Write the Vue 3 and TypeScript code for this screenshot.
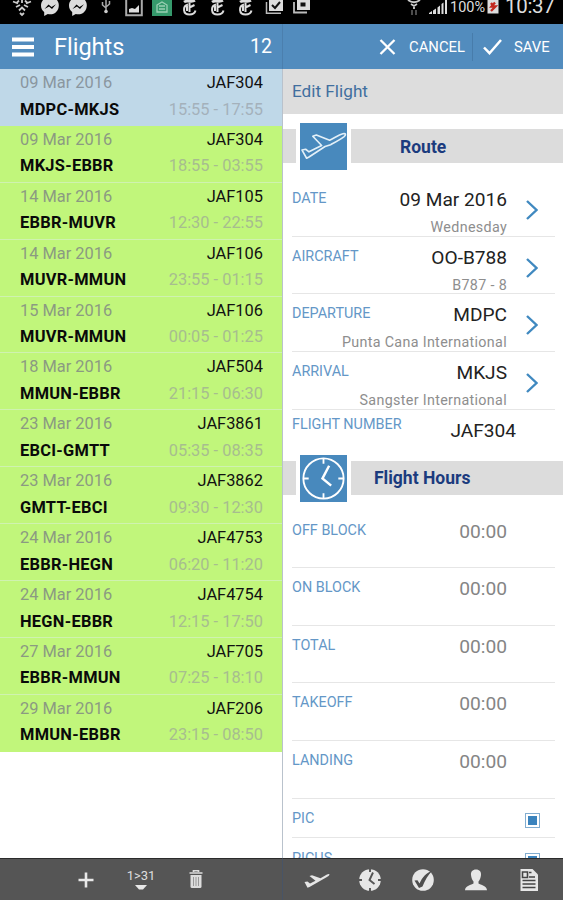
<script setup lang="ts">
interface Flight {
  date: string
  code: string
  route: string
  hours: string
}

interface RouteField {
  label: string
  value: string
  detail: string
}

const flights: Flight[] = [
  { date: '09 Mar 2016', code: 'JAF304', route: 'MDPC-MKJS', hours: '15:55 - 17:55' },
  { date: '09 Mar 2016', code: 'JAF304', route: 'MKJS-EBBR', hours: '18:55 - 03:55' },
  { date: '14 Mar 2016', code: 'JAF105', route: 'EBBR-MUVR', hours: '12:30 - 22:55' },
  { date: '14 Mar 2016', code: 'JAF106', route: 'MUVR-MMUN', hours: '23:55 - 01:15' },
  { date: '15 Mar 2016', code: 'JAF106', route: 'MUVR-MMUN', hours: '00:05 - 01:25' },
  { date: '18 Mar 2016', code: 'JAF504', route: 'MMUN-EBBR', hours: '21:15 - 06:30' },
  { date: '23 Mar 2016', code: 'JAF3861', route: 'EBCI-GMTT', hours: '05:35 - 08:35' },
  { date: '23 Mar 2016', code: 'JAF3862', route: 'GMTT-EBCI', hours: '09:30 - 12:30' },
  { date: '24 Mar 2016', code: 'JAF4753', route: 'EBBR-HEGN', hours: '06:20 - 11:20' },
  { date: '24 Mar 2016', code: 'JAF4754', route: 'HEGN-EBBR', hours: '12:15 - 17:50' },
  { date: '27 Mar 2016', code: 'JAF705', route: 'EBBR-MMUN', hours: '07:25 - 18:10' },
  { date: '29 Mar 2016', code: 'JAF206', route: 'MMUN-EBBR', hours: '23:15 - 08:50' },
]

const routeFields: RouteField[] = [
  { label: 'DATE', value: '09 Mar 2016', detail: 'Wednesday' },
  { label: 'AIRCRAFT', value: 'OO-B788', detail: 'B787 - 8' },
  { label: 'DEPARTURE', value: 'MDPC', detail: 'Punta Cana International' },
  { label: 'ARRIVAL', value: 'MKJS', detail: 'Sangster International' },
]

const hourFields: string[] = ['OFF BLOCK', 'ON BLOCK', 'TOTAL', 'TAKEOFF', 'LANDING']
const roleFields: string[] = ['PIC', 'PICUS']
</script>

<template>
  <div class="screen">
    <header class="status">
      <div class="tray">
        <svg class="glyph" viewBox="0 0 20 18"><path d="M1 1.500l5 2M19 1.500l-5 2M4 7l4-2M16 7l-4-2M7 10.500l3-3 3 3M10 0v3M8 13l2 2 2-2M4 3.500l3-3M16 3.500l-3-3" stroke="#ccc" stroke-width="1.800" fill="none" /></svg>
        <svg v-for="n in 2" :key="'m' + n" class="glyph" viewBox="0 0 20 18"><path d="M10-3C4.500-3 1 1 1 5.500c0 3 1.200 5 3.200 6.500v4l3.600-2c6 1.500 11-2.500 11-8.500C19 1 15.500-3 10-3z" fill="#ddd" /><path d="M4.500 9l4-4.500 3 2.500 4.500-2.800-4 4.800-3-2.500z" fill="#000" /></svg>
        <svg class="glyph" viewBox="0 0 20 18"><path d="M10 0v13M6.500 2v3l3.500 3M13.500 1v3L10 7" stroke="#aaa" stroke-width="1.500" fill="none" /><circle cx="10" cy="11.500" r="1.800" fill="#ccc" /></svg>
        <svg class="glyph" viewBox="0 0 20 18"><path d="M2.200-2h15.600v17.200H2.200z" stroke="#aaa" stroke-width="2" fill="none" /><path d="M5 12.500V9l3-1 3 1 4-4v7.500z" fill="#ddd" /></svg>
        <svg class="glyph" viewBox="0 0 20 18"><path d="M0 0h20v16H0z" fill="#35996b" /><path d="M5 5l5-3 5 3v7H5zM7 6h6M7 9h6" stroke="#9bd0b4" stroke-width="1.300" fill="none" /></svg>
        <svg v-for="n in 3" :key="'t' + n" class="glyph" viewBox="0 0 20 18"><path d="M4 2c3-2.500 7 1 11-1.500" stroke="#ddd" stroke-width="2.600" fill="none" /><path d="M8 4.500C2.500 6 2.500 14.500 9.500 14.500c3.500 0 5.500-2 6-4M9.500 2.500V12M9.500 7.500L14.500 5M7 6v5" stroke="#ddd" stroke-width="2" fill="none" /></svg>
        <svg class="glyph" viewBox="0 0 20 18"><path d="M5 0h14v11H5z" fill="#ddd" /><path d="M8 5l3 3 5-6" stroke="#111" stroke-width="2" fill="none" /><path d="M2.500 2v11.200H17" stroke="#bbb" stroke-width="1.500" fill="none" /></svg>
        <svg class="glyph" viewBox="0 0 20 18"><path d="M5 0h13v10H5z" fill="#ddd" /><path d="M8.500 2.500h5v4h-5z" fill="#111" /><path d="M2 2v10.500h13" stroke="#bbb" stroke-width="1.800" fill="none" /></svg>
      </div>
      <div class="system">
        <svg class="wifi" viewBox="0 0 16 18"><path d="M2 0c4 3 8 3 12 0M5 4l3 2 3-2M8 5v4" stroke="#ccc" stroke-width="1.800" fill="none" /><path d="M6 10v5M10 10v5" stroke="#666" stroke-width="1.500" /></svg>
        <svg class="bars" viewBox="0 0 20 18"><path d="M1 14h3v-3l-3 2zM5 14h3V8.500L5 10.500zM9.500 14h2.500V5.500l-2.500 2zM13.500 14h2V2.500l-2 1.500zM17 14h2V0h-2z" fill="#ddd" /></svg>
        <span class="percent">100%</span>
        <svg class="battery" viewBox="0 0 12 18"><path d="M.5 0h11v13.500H.5z" fill="#ddd" /><path d="M8 2.500L4.500 6.500h4L4 11M4 3l1.500 2" stroke="#c3281e" stroke-width="2.300" fill="none" /></svg>
        <span class="time">10:37</span>
      </div>
    </header>

    <div class="panes">
      <section class="list-pane">
        <div class="bar list-bar">
          <svg class="menu" viewBox="0 0 22 20"><path d="M0 2.500h22M0 10h22M0 17.500h22" stroke="#fff" stroke-width="4" /></svg>
          <h1>Flights</h1>
          <span class="count">12</span>
        </div>
        <ul class="flights">
          <li v-for="(flight, i) in flights" :key="i" :class="{ selected: i === 0 }">
            <div class="line">
              <span class="date">{{ flight.date }}</span>
              <span class="code">{{ flight.code }}</span>
            </div>
            <div class="line">
              <span class="route">{{ flight.route }}</span>
              <span class="hours">{{ flight.hours }}</span>
            </div>
          </li>
        </ul>
        <footer class="toolbar list-tools">
          <svg class="add" viewBox="0 0 16 16"><path d="M8 .5v15M.5 8h15" stroke="#e8e8e8" stroke-width="2.600" /></svg>
          <div class="range">
            <span>1&gt;31</span>
            <svg viewBox="0 0 12 6"><path d="M0 0h12L8 4.500H4z" fill="#e8e8e8" /></svg>
          </div>
          <svg class="trash" viewBox="0 0 14 19"><path d="M4.500 2V.7h5V2M.5 3h13" stroke="#ddd" stroke-width="1.700" fill="none" /><path d="M1.500 5h11v11.500q0 1.500-1.500 1.500H3q-1.500 0-1.500-1.500z" fill="#ddd" /><path d="M4.500 7v9M7 7v9M9.500 7v9" stroke="#999" stroke-width="1" /></svg>
        </footer>
      </section>

      <section class="edit-pane">
        <div class="bar edit-bar">
          <button class="action cancel">
            <svg viewBox="0 0 16 16"><path d="M1 1l14 14M15 1L1 15" stroke="#fff" stroke-width="2.300" /></svg>
            <span>CANCEL</span>
          </button>
          <i class="split"></i>
          <button class="action save">
            <svg viewBox="0 0 19 16"><path d="M1 8.500l5.500 5.700L18 1" stroke="#fff" stroke-width="2.500" fill="none" /></svg>
            <span>SAVE</span>
          </button>
        </div>
        <h2>Edit Flight</h2>
        <div class="form">
          <div class="section">
            <div class="tile">
              <svg viewBox="0 0 46 46"><path d="M2 26.500l3.500-.8 3.300 2.500 12.400-6.200L12.500 13l3.500-1.300L29 16.800c5-2.500 9.500-5.400 13-6.300 3-.5 3.300 1 1.200 2.800-3.500 2.700-8.200 5.200-13.200 7.900L24.500 23 8.800 33.300 6.500 34.500z" stroke="#e3f0f8" stroke-width="1.600" stroke-linejoin="round" fill="none" /></svg>
            </div>
            <h3 class="route-title">Route</h3>
          </div>
          <div v-for="field in routeFields" :key="field.label" class="row route-row">
            <label>{{ field.label }}</label>
            <div class="values">
              <strong>{{ field.value }}</strong>
              <small>{{ field.detail }}</small>
            </div>
            <svg class="chevron" viewBox="0 0 12 20"><path d="M1 1l9.500 9L1 19" stroke="#4089c0" stroke-width="2.400" fill="none" /></svg>
          </div>
          <div class="row number-row">
            <label>FLIGHT NUMBER</label>
            <strong>JAF304</strong>
          </div>
          <div class="section">
            <div class="tile">
              <svg viewBox="0 0 46 46"><circle cx="23" cy="23" r="19.700" stroke="#fff" stroke-width="1.800" fill="none" /><path d="M23 3v5.500M23 37.500V43M3 23h5.500M37.500 23H43" stroke="#fff" stroke-width="1.800" /><path d="M28.500 10.500L22 23l8.500 7" stroke="#fff" stroke-width="2.400" fill="none" /></svg>
            </div>
            <h3 class="hours-title">Flight Hours</h3>
          </div>
          <div v-for="label in hourFields" :key="label" class="row hour-row">
            <label>{{ label }}</label>
            <span class="clock">00:00</span>
          </div>
          <div v-for="label in roleFields" :key="label" class="row role-row">
            <label>{{ label }}</label>
            <i class="check"></i>
          </div>
        </div>
        <footer class="toolbar edit-tools">
          <svg viewBox="0 0 26 24"><path d="M.5 14l3-.5 2.500 2 5.500-2.800L5.500 8l2.500-.8 8.500 3 6-3.500q3-1.300 3 0-.5 1-3 2.500L5.500 19l-2 .8z" fill="#e6e6e6" /></svg>
          <svg viewBox="0 0 26 24"><circle cx="13" cy="12" r="10.800" fill="#e6e6e6" /><path d="M13 0v4M13 20v4M1 12h4M21 12h4M16 4.500L12.500 12l5 4" stroke="#555" stroke-width="1.900" fill="none" /></svg>
          <svg viewBox="0 0 26 24"><circle cx="13" cy="12" r="10.800" fill="#e6e6e6" /><path d="M4.500 12.500l3-.3 2 3.300C12.500 9 16 5 22.500 2.500 18 7 15 12 12.500 18.500L9 20z" fill="#4d4d4d" /></svg>
          <svg viewBox="0 0 26 24"><path d="M13 1.500c3.500 0 5.300 2.300 5 5.500-.3 3-1.200 5-2.500 6.500v2c2 1.500 8.500 2 8.500 6.800H2c0-4.800 6.500-5.300 8.500-6.800v-2C9.200 12 8.300 10 8 7c-.3-3.200 1.500-5.500 5-5.500z" fill="#e6e6e6" /></svg>
          <svg viewBox="0 0 26 24"><path d="M4.500 1h12l5.500 5.500V23h-17.500z" fill="#e6e6e6" /><path d="M6.500 4h5v5.500h-5zM13 4.500h2.500M13 9h6M6.500 12.500h13M6.500 16h13M6.500 19.500h13" stroke="#444" stroke-width="1.600" fill="none" /></svg>
        </footer>
      </section>
    </div>
  </div>
</template>

<style>
body {
  margin: 0;
}
</style>

<style scoped>
* {
  box-sizing: border-box;
}

.screen {
  display: flex;
  flex-direction: column;
  width: 563px;
  height: 900px;
  overflow: hidden;
  background: #fff;
  color: #111;
  font-family: Roboto, "Liberation Sans", sans-serif;
}

svg {
  display: block;
  flex: none;
}

h1,
h2,
h3,
ul {
  margin: 0;
  padding: 0;
}

.status {
  display: flex;
  flex: none;
  justify-content: space-between;
  height: 24px;
  padding: 0 8px 0 12px;
  background: #000;
  color: #ddd;
}

.tray {
  display: flex;
  gap: 8px;
}

.glyph {
  width: 20px;
  height: 18px;
}

.system {
  display: flex;
}

.wifi {
  width: 16px;
  height: 18px;
  margin-right: 6px;
}

.bars {
  width: 20px;
  height: 18px;
  margin-right: 2px;
}

.percent {
  width: 37px;
  font-size: 14.5px;
  line-height: 15px;
}

.battery {
  width: 12px;
  height: 18px;
  margin-right: 6px;
}

.time {
  width: 50px;
  font-size: 20.5px;
  line-height: 12px;
  letter-spacing: -0.3px;
}

.panes {
  display: grid;
  grid-template-columns: 283px 280px;
  flex: 1;
  min-height: 0;
}

.list-pane,
.edit-pane {
  display: flex;
  flex-direction: column;
  min-height: 0;
}

.list-pane {
  border-right: 1px solid #b9c2cc;
}

.bar {
  display: flex;
  flex: none;
  align-items: center;
  height: 45px;
  background: #528cbe;
  color: #fff;
}

.list-bar {
  margin-right: -1px;
  padding: 0 10px 0 12px;
  border-right: 1px solid #4b7fae;
}

.menu {
  width: 22px;
  height: 20px;
}

h1 {
  margin-left: 20px;
  font-size: 23.5px;
  font-weight: 400;
}

.count {
  margin-left: auto;
  font-size: 19.5px;
}

.flights {
  flex: 1;
  list-style: none;
}

.flights li {
  height: 56.9px;
  padding: 2px 19px 0 20px;
  background: #c1f67b;
  border-bottom: 1px solid #cff2b0;
}

.flights li.selected {
  background: #bfd8e8;
  border-bottom-color: #bfd8e8;
}

.flights li:last-child {
  border-bottom-color: #c1f67b;
}

.line {
  display: flex;
  justify-content: space-between;
  height: 26.5px;
  font-size: 16.4px;
  line-height: 23px;
}

.date {
  color: #8b9a82;
}

.selected .date {
  color: #8a969f;
}

.code {
  color: #111;
}

.route {
  color: #0a0a0a;
  font-weight: 700;
  letter-spacing: 0.28px;
}

.hours {
  color: #a7bd8f;
}

.selected .hours {
  color: #a4b1bb;
}

.toolbar {
  display: flex;
  flex: none;
  align-items: center;
  height: 42px;
  background: #555;
  border-top: 1px solid #2b2b2b;
}

.list-tools {
  margin-right: -1px;
  padding-left: 78px;
  border-right: 1px solid #485466;
}

.add {
  width: 16px;
  height: 16px;
}

.range {
  display: flex;
  flex-direction: column;
  align-items: center;
  width: 30px;
  margin: 0 33px 0 32px;
  color: #ddd;
  font-size: 13px;
  line-height: 15px;
}

.range svg {
  width: 12px;
  height: 6px;
  margin-top: 2px;
}

.trash {
  width: 14px;
  height: 19px;
}

.edit-bar {
  padding-left: 96px;
}

.action {
  display: flex;
  align-items: center;
  padding: 0;
  border: 0;
  background: none;
  color: #fff;
  font-family: inherit;
  font-size: 14.8px;
}

.cancel svg {
  width: 17px;
  height: 16px;
  margin-right: 13px;
}

.cancel span {
  width: 56px;
}

.split {
  width: 1px;
  height: 28px;
  margin: 0 10px 0 7px;
  background: #477cab;
}

.save svg {
  width: 19px;
  height: 16px;
  margin-right: 12px;
}

h2 {
  flex: none;
  height: 45px;
  padding-left: 9px;
  background: #ddd;
  color: #416f9f;
  font-size: 17.2px;
  font-weight: 400;
  line-height: 45px;
}

.form {
  flex: 1;
  min-height: 0;
  padding-top: 6px;
  overflow: hidden;
}

.section {
  display: flex;
  align-items: center;
  height: 53px;
  background: linear-gradient(transparent 9px, #dcdcdc 9px, #dcdcdc 43px, transparent 43px);
}

.tile {
  width: 55px;
  height: 53px;
  margin-left: 13px;
  border: 3px solid #fff;
  border-right-width: 4px;
  border-left-width: 4px;
  background: #4889bd;
}

.tile svg {
  width: 47px;
  height: 47px;
}

h3 {
  color: #1b3b7e;
  font-size: 17.5px;
  font-weight: 700;
  line-height: 54px;
}

.route-title {
  margin-left: 49px;
}

.hours-title {
  margin-left: 23px;
}

.row {
  display: flex;
  margin: 0 8px 0 9px;
  border-bottom: 1px solid #e6e6e6;
}

label {
  color: #6497c7;
  font-size: 14.4px;
  line-height: 18px;
  white-space: nowrap;
}

.row strong {
  color: #222;
  font-size: 19.1px;
  font-weight: 400;
  line-height: 24px;
}

.route-row {
  height: 57.7px;
  padding-top: 11px;
}

.section + .route-row {
  height: 63.5px;
  padding-top: 17px;
}

.values {
  display: flex;
  flex: 1;
  flex-direction: column;
  align-items: flex-end;
  margin-top: -2px;
  white-space: nowrap;
}

.route-row label {
  width: 0;
}

.values small {
  margin-top: 6px;
  color: #8e8e8e;
  font-size: 14.3px;
  line-height: 18px;
  letter-spacing: 0.33px;
}

.chevron {
  width: 12px;
  height: 20px;
  margin: 10px 17px 0 19px;
}

.number-row {
  justify-content: space-between;
  height: 42px;
  padding: 6px 39px 0 0;
  border: 0;
}

.number-row strong {
  padding-top: 3px;
}

.hour-row {
  justify-content: space-between;
  height: 57.7px;
  padding: 11px 48px 0 0;
}

.section + .hour-row {
  height: 63.5px;
  padding-top: 17px;
}

.clock {
  margin-top: -2px;
  color: #858585;
  font-size: 19.2px;
  line-height: 24px;
}

.role-row {
  justify-content: space-between;
  height: 39.5px;
  padding: 11px 15px 0 0;
}

.role-row + .role-row {
  padding-top: 12px;
}

.check {
  width: 15px;
  height: 15px;
  margin-top: 3px;
  border: 1px solid #82add0;
  background: #3b83bd;
  box-shadow: inset 0 0 0 2px #fff;
}

.edit-tools {
  justify-content: space-between;
  padding: 0 21px;
}

.edit-tools svg {
  width: 26px;
  height: 24px;
}
</style>
